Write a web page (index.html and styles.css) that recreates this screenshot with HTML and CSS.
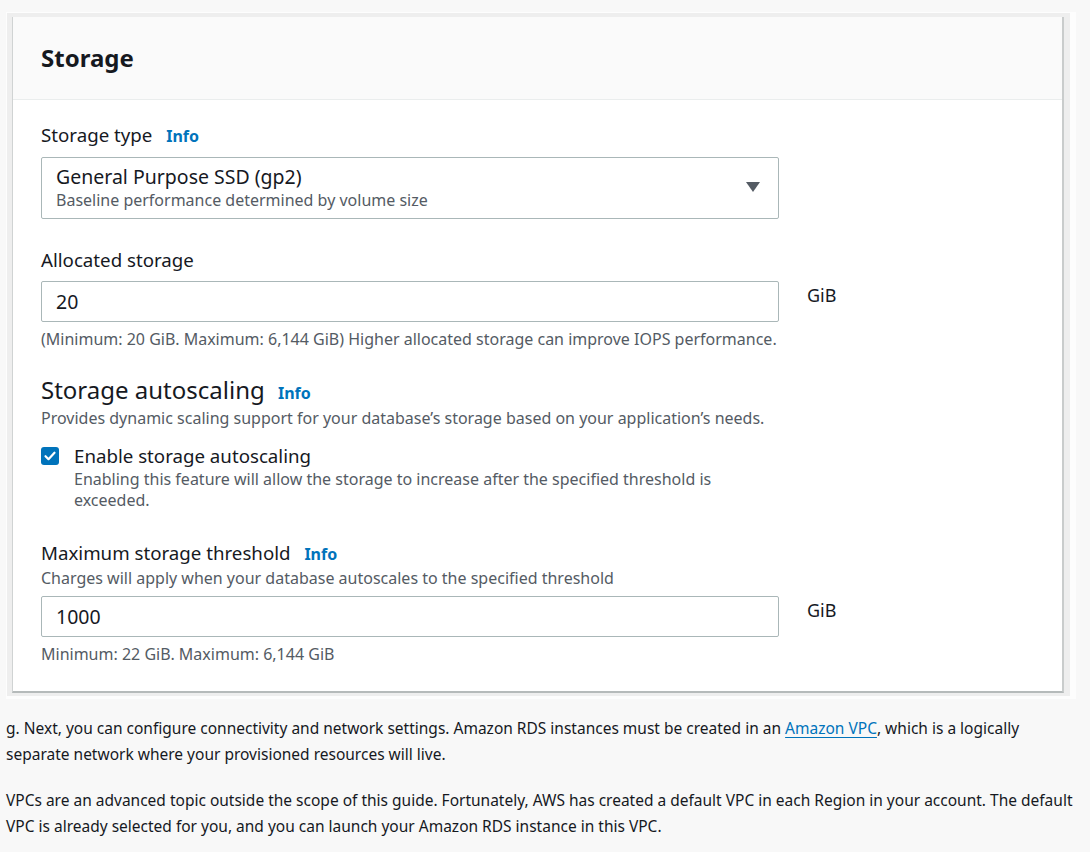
FILE: index.html
```html
<!DOCTYPE html>
<html lang="en">
<head>
<meta charset="utf-8">
<title>Storage</title>
<link rel="stylesheet" href="styles.css">
</head>
<body>
<div class="shot">
  <div class="band">
    <section class="panel">
      <header class="panel-head">
        <h2>Storage</h2>
      </header>
      <div class="panel-body">
        <div class="field first">
          <div class="label">Storage type <a class="info" href="#">Info</a></div>
          <div class="select">
            <div class="select-text">
              <div class="select-main">General Purpose SSD (gp2)</div>
              <div class="select-sub">Baseline performance determined by volume size</div>
            </div>
            <svg class="caret" width="16" height="12" viewBox="0 0 16 12"><path d="M1 1h14L8 11z" fill="#545b64"/></svg>
          </div>
        </div>

        <div class="field second">
          <div class="label">Allocated storage</div>
          <div class="input-row">
            <div class="input">20</div>
            <span class="unit">GiB</span>
          </div>
          <div class="hint">(Minimum: 20 GiB. Maximum: 6,144 GiB) Higher allocated storage can improve IOPS performance.</div>
        </div>

        <div class="subsection">
          <h3>Storage autoscaling <a class="info" href="#">Info</a></h3>
          <div class="desc">Provides dynamic scaling support for your database’s storage based on your application’s needs.</div>
          <div class="check">
            <span class="box"><svg width="18" height="18" viewBox="0 0 18 18"><path d="M4.5 9.2l3 3 6-6.5" fill="none" stroke="#fff" stroke-width="2.2" stroke-linecap="round" stroke-linejoin="round"/></svg></span>
            <div class="check-text">
              <div class="check-label">Enable storage autoscaling</div>
              <div class="check-desc">Enabling this feature will allow the storage to increase after the specified threshold is exceeded.</div>
            </div>
          </div>
        </div>

        <div class="field last">
          <div class="label flush">Maximum storage threshold <a class="info" href="#">Info</a></div>
          <div class="desc tight">Charges will apply when your database autoscales to the specified threshold</div>
          <div class="input-row">
            <div class="input">1000</div>
            <span class="unit">GiB</span>
          </div>
          <div class="hint">Minimum: 22 GiB. Maximum: 6,144 GiB</div>
        </div>
      </div>
    </section>
  </div>
</div>

<p class="para">g. Next, you can configure connectivity and network settings. Amazon RDS instances must be created in an <a href="#" class="link">Amazon VPC</a>, which is a logically separate network where your provisioned resources will live.</p>
<p class="para">VPCs are an advanced topic outside the scope of this guide. Fortunately, AWS has created a default VPC in each Region in your account. The default VPC is already selected for you, and you can launch your Amazon RDS instance in this VPC.</p>
</body>
</html>
```

FILE: styles.css
```css
html, body {
  margin: 0;
  padding: 0;
  background: #f8f8f8;
}
body {
  font-family: "Noto Sans", "Open Sans", sans-serif;
  color: #16191f;
  padding: 12px 8px 0 6px;
}
.shot {
  background: #fdfdfd;
  padding: 1px 6px 3px 1px;
  margin-right: 6px;
}
.band {
  background: #eeeeee;
  padding: 4px 6px 3px 5px;
}
.panel {
  background: #ffffff;
  border-left: 1px solid #d0d3d3;
  border-right: 2px solid #c9cccc;
  border-bottom: 2px solid #b5baba;
}
.panel-head {
  background: #fafafa;
  border-bottom: 1px solid #eaeded;
  height: 82px;
  padding: 0 28px;
  display: flex;
  align-items: center;
}
.panel-head h2 {
  margin: 0 0 2px 0;
  font-size: 24px;
  font-weight: 700;
}
.panel-body {
  padding: 22px 28px 26px 28px;
}
.field.first { margin-bottom: 28px; }
.field.second { margin-bottom: 26px; }
.label {
  font-size: 18.7px;
  line-height: 26px;
  margin-bottom: 8px;
}
.label.flush { margin-bottom: 0; }
.info {
  color: #0073bb;
  font-weight: 700;
  font-size: 16px;
  text-decoration: none;
  margin-left: 9px;
}
.select {
  width: 738px;
  height: 62px;
  box-sizing: border-box;
  border: 1px solid #aab7b8;
  border-radius: 2px;
  padding: 0 17px 0 14px;
  display: flex;
  align-items: center;
  justify-content: space-between;
}
.select-main { font-size: 19.5px; line-height: 24px; margin-top: -1px; }
.select-sub { font-size: 16px; line-height: 22px; color: #545b64; }
.caret { margin-top: -2px; }
.input-row {
  display: flex;
  align-items: flex-start;
  gap: 28px;
}
.input {
  width: 738px;
  height: 41px;
  box-sizing: border-box;
  border: 1px solid #aab7b8;
  border-radius: 2px;
  padding: 0 14px;
  display: flex;
  align-items: center;
  font-size: 19.5px;
}
.unit {
  font-size: 18px;
  line-height: 28px;
}
.hint {
  font-size: 16px;
  line-height: 22px;
  color: #545b64;
  margin-top: 6px;
}
.subsection { margin-bottom: 29px; }
.subsection h3 {
  margin: 0;
  font-size: 24px;
  font-weight: 400;
  line-height: 28px;
}
.subsection h3 .info { margin-left: 7px; }
.desc {
  font-size: 16px;
  line-height: 22px;
  color: #545b64;
}
.desc.tight { margin-bottom: 7px; }
.check {
  display: flex;
  gap: 15px;
  margin-top: 14px;
}
.box {
  width: 18px;
  height: 18px;
  border-radius: 3px;
  background: #0073bb;
  margin-top: 4px;
  flex: none;
  display: block;
}
.box svg { display: block; }
.check-label { font-size: 18.7px; line-height: 26px; }
.check-desc {
  font-size: 16px;
  line-height: 21px;
  color: #545b64;
  width: 670px;
}
.para {
  margin: 16px 0 0 0;
  font-size: 15.5px;
  line-height: 26px;
  color: #16191f;
}
.para + .para { margin-top: 20px; }
.link {
  color: #0073bb;
  text-decoration: underline;
  text-underline-offset: 3px;
}
```
